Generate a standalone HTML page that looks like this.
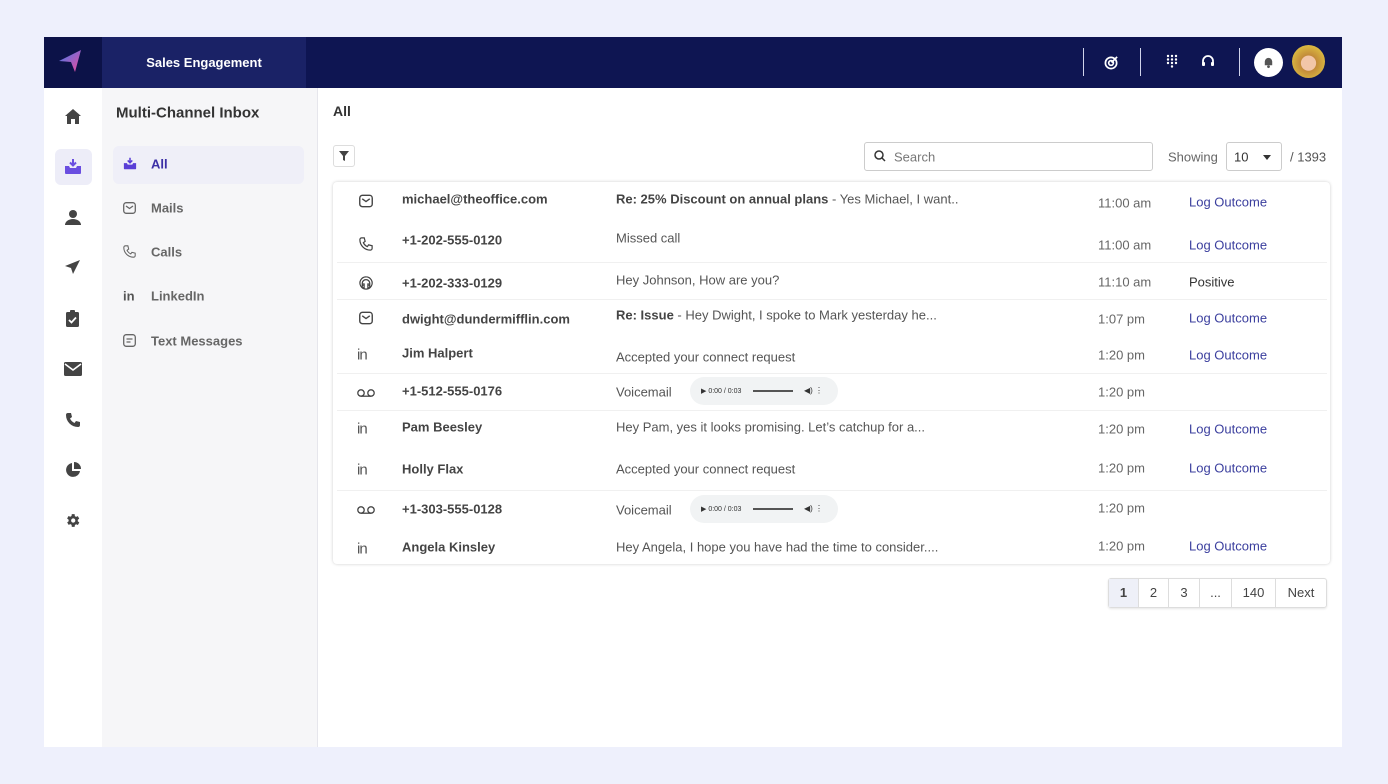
<!DOCTYPE html>
<html><head><meta charset="utf-8"><style>
*{margin:0;padding:0;box-sizing:border-box}
body{width:1388px;height:784px;background:#eef0fc;font-family:"Liberation Sans",sans-serif;position:relative;overflow:hidden}
.a{position:absolute}
.t{position:absolute;font-size:13px;color:#555;white-space:nowrap;transform:translateY(-50%)}
.n{color:#444;font-weight:bold}
.lo{color:#3b3f9e}
.tm{color:#666}
svg{display:block}
.ico{position:absolute;transform:translate(-50%,-50%)}
.player{position:absolute;width:148px;height:28px;border-radius:14px;background:#f1f3f4;transform:translateY(-50%);font-size:6px;color:#333}
</style></head><body>
<!-- frame -->
<div class="a" style="left:44px;top:37px;width:1298px;height:710px;background:#fff"></div>
<!-- header -->
<div class="a" style="left:44px;top:37px;width:1298px;height:51px;background:#0e1552"></div>
<div class="a" style="left:44px;top:37px;width:58px;height:51px;background:#0c1248"></div>
<div class="a" style="left:102px;top:37px;width:204px;height:51px;background:#1a2266;color:#fff;font-size:13px;font-weight:bold;text-align:center;line-height:51px">Sales Engagement</div>
<svg class="a" style="left:57px;top:48px" width="26" height="26" viewBox="0 0 26 26"><defs><linearGradient id="g" x1="0" y1="0" x2="1" y2="1"><stop offset="0" stop-color="#3f7bf0"/><stop offset="1" stop-color="#f0489a"/></linearGradient></defs><path d="M2 13 L24 2 L18 24 L14 14 Z" fill="url(#g)"/></svg>
<div class="a" style="left:1083px;top:48px;width:1px;height:28px;background:#cfd3ea"></div>
<div class="a" style="left:1140px;top:48px;width:1px;height:28px;background:#cfd3ea"></div>
<div class="a" style="left:1239px;top:48px;width:1px;height:28px;background:#cfd3ea"></div>
<svg class="a" style="left:1104px;top:55px" width="15" height="15" viewBox="0 0 16 16"><circle cx="7.5" cy="8.5" r="6" fill="none" stroke="#fff" stroke-width="1.8"/><circle cx="7.5" cy="8.5" r="2.5" fill="none" stroke="#fff" stroke-width="1.8"/><path d="M8 8 L14 2" stroke="#fff" stroke-width="1.8"/></svg>
<svg class="a" style="left:1165px;top:54px" width="14" height="14" viewBox="0 0 14 14" fill="#fff"><circle cx="3" cy="2" r="1.2"/><circle cx="7" cy="2" r="1.2"/><circle cx="11" cy="2" r="1.2"/><circle cx="3" cy="5.5" r="1.2"/><circle cx="7" cy="5.5" r="1.2"/><circle cx="11" cy="5.5" r="1.2"/><circle cx="3" cy="9" r="1.2"/><circle cx="7" cy="9" r="1.2"/><circle cx="11" cy="9" r="1.2"/><circle cx="7" cy="12.5" r="1.2"/></svg>
<svg class="a" style="left:1200px;top:53px" width="16" height="16" viewBox="0 0 16 16"><path d="M3 10 V8 a5 5 0 0 1 10 0 V10" fill="none" stroke="#fff" stroke-width="1.8"/><rect x="2" y="9" width="3" height="4" rx="1" fill="#fff"/><rect x="11" y="9" width="3" height="4" rx="1" fill="#fff"/></svg>
<div class="a" style="left:1254px;top:48px;width:29px;height:29px;border-radius:50%;background:#fff"></div>
<svg class="a" style="left:1262px;top:56px" width="13" height="13" viewBox="0 0 14 14"><path d="M3 10 V6 a4 4 0 0 1 8 0 V10 Z" fill="#555"/><circle cx="7" cy="11.5" r="1.5" fill="#555"/></svg>
<div class="a" style="left:1292px;top:45px;width:33px;height:33px;border-radius:50%;background:radial-gradient(circle at 50% 55%,#f2c6a8 0 30%,#c28a3a 32%,#d9b640 70%)"></div>
<!-- left icon rail -->
<div class="a" style="left:44px;top:88px;width:58px;height:659px;background:#fff"></div>
<div class="a" style="left:55px;top:149px;width:37px;height:36px;border-radius:6px;background:#ededf8"></div>
<svg class="a" style="left:64px;top:108px" width="18" height="17" viewBox="0 0 18 17"><path d="M9 1 L17 8 H15 V16 H11 V11 H7 V16 H3 V8 H1 Z" fill="#444"/></svg>
<svg class="a" style="left:64px;top:158px" width="18" height="17" viewBox="0 0 18 17"><path d="M1 8 H5 L6 10 H12 L13 8 H17 V15 a1 1 0 0 1 -1 1 H2 a1 1 0 0 1 -1 -1 Z" fill="#6a4ee0"/><path d="M9 1 V7 M6 4.5 L9 7.5 L12 4.5" stroke="#6a4ee0" stroke-width="2" fill="none"/></svg>
<svg class="a" style="left:64px;top:209px" width="18" height="17" viewBox="0 0 18 17"><circle cx="9" cy="5" r="4" fill="#444"/><path d="M1 16 a8 6 0 0 1 16 0 Z" fill="#444"/></svg>
<svg class="a" style="left:64px;top:259px" width="17" height="16" viewBox="0 0 17 16"><path d="M16 1 L1 7 L7 9 L9 15 Z" fill="#444"/></svg>
<svg class="a" style="left:65px;top:309px" width="15" height="19" viewBox="0 0 15 19"><rect x="1" y="3" width="13" height="15" rx="1.5" fill="#444"/><rect x="5" y="1" width="5" height="4" rx="1" fill="#444"/><path d="M4 11 L6.5 13.5 L11 8.5" stroke="#fff" stroke-width="1.8" fill="none"/></svg>
<svg class="a" style="left:64px;top:362px" width="18" height="14" viewBox="0 0 18 14"><rect x="0" y="0" width="18" height="14" rx="1.5" fill="#444"/><path d="M1 2 L9 8 L17 2" stroke="#fff" stroke-width="1.6" fill="none"/></svg>
<svg class="a" style="left:65px;top:412px" width="16" height="16" viewBox="0 0 16 16"><path d="M3 1 L6 1 L7 5 L5 6.5 A9 9 0 0 0 9.5 11 L11 9 L15 10 V13 A2 2 0 0 1 13 15 A12 12 0 0 1 1 3 A2 2 0 0 1 3 1 Z" fill="#444"/></svg>
<svg class="a" style="left:65px;top:462px" width="16" height="16" viewBox="0 0 16 16"><path d="M7 1 A7 7 0 1 0 15 9 H7 Z" fill="#444"/><path d="M9 0 V7 H16 A7 7 0 0 0 9 0 Z" fill="#444"/></svg>
<svg class="a" style="left:64px;top:512px" width="17" height="17" viewBox="0 0 24 24"><path d="M19.4 13a7.5 7.5 0 0 0 0-2l2.1-1.6-2-3.5-2.5 1a7.6 7.6 0 0 0-1.7-1L15 3h-4l-.4 2.7a7.6 7.6 0 0 0-1.7 1l-2.5-1-2 3.5L6.6 11a7.5 7.5 0 0 0 0 2l-2.1 1.6 2 3.5 2.5-1a7.6 7.6 0 0 0 1.7 1L11 21h4l.4-2.7a7.6 7.6 0 0 0 1.7-1l2.5 1 2-3.5z" fill="#444"/><circle cx="13" cy="12" r="3" fill="#fff"/></svg>
<!-- secondary nav -->
<div class="a" style="left:102px;top:88px;width:216px;height:659px;background:#f6f6f8;border-right:1px solid #e6e6ec"></div>
<div class="t" style="left:116px;top:113px;font-size:15px;font-weight:bold;color:#333">Multi-Channel Inbox</div>
<div class="a" style="left:113px;top:146px;width:191px;height:38px;border-radius:6px;background:#efeff8"></div>
<svg class="a" style="left:123px;top:157px" width="14" height="13" viewBox="0 0 18 17"><path d="M1 8 H5 L6 10 H12 L13 8 H17 V15 a1 1 0 0 1 -1 1 H2 a1 1 0 0 1 -1 -1 Z" fill="#5a3fd6"/><path d="M9 1 V7 M6 4.5 L9 7.5 L12 4.5" stroke="#5a3fd6" stroke-width="2" fill="none"/></svg>
<div class="t" style="left:151px;top:164px;color:#3b2fa6;font-weight:bold">All</div>
<svg class="a" style="left:123px;top:202px" width="13" height="12" viewBox="0 0 13 12"><rect x="0.7" y="0.7" width="11.6" height="10.6" rx="2.5" fill="none" stroke="#666" stroke-width="1.3"/><path d="M3 4 L6.5 6.5 L10 4" stroke="#666" stroke-width="1.3" fill="none"/></svg>
<div class="t" style="left:151px;top:208px;color:#666;font-weight:bold">Mails</div>
<svg class="a" style="left:123px;top:245px" width="13" height="13" viewBox="0 0 16 16"><path d="M3 1 L6 1 L7 5 L5 6.5 A9 9 0 0 0 9.5 11 L11 9 L15 10 V13 A2 2 0 0 1 13 15 A12 12 0 0 1 1 3 A2 2 0 0 1 3 1 Z" fill="none" stroke="#666" stroke-width="1.3"/></svg>
<div class="t" style="left:151px;top:252px;color:#666;font-weight:bold">Calls</div>
<div class="t" style="left:123px;top:296px;color:#555;font-weight:bold;font-size:13px">in</div>
<div class="t" style="left:151px;top:296px;color:#666;font-weight:bold">LinkedIn</div>
<svg class="a" style="left:123px;top:334px" width="13" height="13" viewBox="0 0 13 13"><rect x="0.7" y="0.7" width="11.6" height="11.6" rx="2.5" fill="none" stroke="#666" stroke-width="1.3"/><path d="M3.5 5 H9.5 M3.5 8 H7.5" stroke="#666" stroke-width="1.3"/></svg>
<div class="t" style="left:151px;top:341px;color:#666;font-weight:bold">Text Messages</div>
<!-- main -->
<div class="t" style="left:333px;top:111px;font-size:14px;font-weight:bold;color:#333">All</div>
<div class="a" style="left:333px;top:145px;width:22px;height:22px;border:1px solid #ddd;border-radius:3px"></div>
<svg class="a" style="left:339px;top:151px" width="10" height="10" viewBox="0 0 10 10"><path d="M0 0 H10 L6 5 V10 L4 9 V5 Z" fill="#444"/></svg>
<div class="a" style="left:864px;top:142px;width:289px;height:29px;border:1px solid #ccc;border-radius:3px"></div>
<svg class="a" style="left:874px;top:150px" width="12" height="12" viewBox="0 0 12 12"><circle cx="5" cy="5" r="4" fill="none" stroke="#333" stroke-width="1.5"/><path d="M8 8 L11 11" stroke="#333" stroke-width="1.5"/></svg>
<div class="t" style="left:894px;top:157px;color:#777">Search</div>
<div class="t" style="left:1168px;top:157px;color:#666">Showing</div>
<div class="a" style="left:1226px;top:142px;width:56px;height:29px;border:1px solid #ccc;border-radius:3px"></div>
<div class="t" style="left:1234px;top:157px;color:#333">10</div>
<div class="a" style="left:1263px;top:155px;border:4px solid transparent;border-top:5px solid #333"></div>
<div class="t" style="left:1290px;top:157px;color:#555">/ 1393</div>
<!-- card -->
<div class="a" style="left:333px;top:182px;width:997px;height:382px;border-radius:4px;box-shadow:0 0 3px rgba(0,0,0,.2);background:#fff"></div>
<div class="a" style="left:337px;top:262px;width:990px;height:1px;background:#f0f0f0"></div>
<div class="a" style="left:337px;top:299px;width:990px;height:1px;background:#f0f0f0"></div>
<div class="a" style="left:337px;top:373px;width:990px;height:1px;background:#f0f0f0"></div>
<div class="a" style="left:337px;top:410px;width:990px;height:1px;background:#f0f0f0"></div>
<div class="a" style="left:337px;top:490px;width:990px;height:1px;background:#f0f0f0"></div>

<!-- icons -->
<svg class="ico" style="left:366px;top:201px" width="14" height="13" viewBox="0 0 13 12"><rect x="0.7" y="0.7" width="11.6" height="10.6" rx="2.5" fill="none" stroke="#444" stroke-width="1.3"/><path d="M3 4 L6.5 6.5 L10 4" stroke="#444" stroke-width="1.3" fill="none"/></svg>
<svg class="ico" style="left:366px;top:244px" width="14" height="14" viewBox="0 0 16 16"><path d="M3 1 L6 1 L7 5 L5 6.5 A9 9 0 0 0 9.5 11 L11 9 L15 10 V13 A2 2 0 0 1 13 15 A12 12 0 0 1 1 3 A2 2 0 0 1 3 1 Z" fill="none" stroke="#444" stroke-width="1.4"/></svg>
<svg class="ico" style="left:366px;top:283px" width="15" height="15" viewBox="0 0 16 16"><path d="M8 1.5 a6.5 6.5 0 1 0 0.1 0 M5 11 a4 4 0 1 1 6 0 M4 9 h2 v4 h-2 z M10 9 h2 v4 h-2 z" fill="none" stroke="#444" stroke-width="1.3"/></svg>
<svg class="ico" style="left:366px;top:318px" width="14" height="13" viewBox="0 0 13 12"><rect x="0.7" y="0.7" width="11.6" height="10.6" rx="2.5" fill="none" stroke="#444" stroke-width="1.3"/><path d="M3 4 L6.5 6.5 L10 4" stroke="#444" stroke-width="1.3" fill="none"/></svg>
<svg class="ico" style="left:366px;top:393px" width="18" height="9" viewBox="0 0 18 9"><circle cx="4" cy="4.5" r="3.2" fill="none" stroke="#444" stroke-width="1.3"/><circle cx="14" cy="4.5" r="3.2" fill="none" stroke="#444" stroke-width="1.3"/><path d="M4 7.7 H14" stroke="#444" stroke-width="1.3"/></svg>
<svg class="ico" style="left:366px;top:510px" width="18" height="9" viewBox="0 0 18 9"><circle cx="4" cy="4.5" r="3.2" fill="none" stroke="#444" stroke-width="1.3"/><circle cx="14" cy="4.5" r="3.2" fill="none" stroke="#444" stroke-width="1.3"/><path d="M4 7.7 H14" stroke="#444" stroke-width="1.3"/></svg>
<div class="t" style="left:357px;top:355px;color:#555;font-size:15px;letter-spacing:-1px">in</div>
<div class="t" style="left:357px;top:429px;color:#555;font-size:15px;letter-spacing:-1px">in</div>
<div class="t" style="left:357px;top:470px;color:#555;font-size:15px;letter-spacing:-1px">in</div>
<div class="t" style="left:357px;top:549px;color:#555;font-size:15px;letter-spacing:-1px">in</div>

<!-- names -->
<div class="t n" style="left:402px;top:199px">michael@theoffice.com</div>
<div class="t n" style="left:402px;top:240px">+1-202-555-0120</div>
<div class="t n" style="left:402px;top:283px">+1-202-333-0129</div>
<div class="t n" style="left:402px;top:319px">dwight@dundermifflin.com</div>
<div class="t n" style="left:402px;top:353px">Jim Halpert</div>
<div class="t n" style="left:402px;top:391px">+1-512-555-0176</div>
<div class="t n" style="left:402px;top:427px">Pam Beesley</div>
<div class="t n" style="left:402px;top:469px">Holly Flax</div>
<div class="t n" style="left:402px;top:509px">+1-303-555-0128</div>
<div class="t n" style="left:402px;top:547px">Angela Kinsley</div>
<!-- messages -->
<div class="t" style="left:616px;top:199px"><b style="color:#444">Re: 25% Discount on annual plans</b> - Yes Michael, I want..</div>
<div class="t" style="left:616px;top:238px">Missed call</div>
<div class="t" style="left:616px;top:280px">Hey Johnson, How are you?</div>
<div class="t" style="left:616px;top:315px"><b style="color:#444">Re: Issue</b> - Hey Dwight, I spoke to Mark yesterday he...</div>
<div class="t" style="left:616px;top:357px">Accepted your connect request</div>
<div class="t" style="left:616px;top:392px">Voicemail</div>
<div class="player" style="left:690px;top:391px"><span class="a" style="left:11px;top:10px;font-size:7px">▶ 0:00 / 0:03</span><span class="a" style="left:63px;top:13px;width:40px;height:2px;background:#555"></span><span class="a" style="left:114px;top:9px;font-size:8px">◀) ⋮</span></div>
<div class="t" style="left:616px;top:427px">Hey Pam, yes it looks promising. Let’s catchup for a...</div>
<div class="t" style="left:616px;top:469px">Accepted your connect request</div>
<div class="t" style="left:616px;top:510px">Voicemail</div>
<div class="player" style="left:690px;top:509px"><span class="a" style="left:11px;top:10px;font-size:7px">▶ 0:00 / 0:03</span><span class="a" style="left:63px;top:13px;width:40px;height:2px;background:#555"></span><span class="a" style="left:114px;top:9px;font-size:8px">◀) ⋮</span></div>
<div class="t" style="left:616px;top:547px">Hey Angela, I hope you have had the time to consider....</div>
<!-- times -->
<div class="t tm" style="left:1098px;top:203px">11:00 am</div>
<div class="t tm" style="left:1098px;top:245px">11:00 am</div>
<div class="t tm" style="left:1098px;top:282px">11:10 am</div>
<div class="t tm" style="left:1098px;top:319px">1:07 pm</div>
<div class="t tm" style="left:1098px;top:355px">1:20 pm</div>
<div class="t tm" style="left:1098px;top:392px">1:20 pm</div>
<div class="t tm" style="left:1098px;top:429px">1:20 pm</div>
<div class="t tm" style="left:1098px;top:468px">1:20 pm</div>
<div class="t tm" style="left:1098px;top:508px">1:20 pm</div>
<div class="t tm" style="left:1098px;top:546px">1:20 pm</div>
<!-- actions -->
<div class="t lo" style="left:1189px;top:202px">Log Outcome</div>
<div class="t lo" style="left:1189px;top:245px">Log Outcome</div>
<div class="t" style="left:1189px;top:282px;color:#333">Positive</div>
<div class="t lo" style="left:1189px;top:318px">Log Outcome</div>
<div class="t lo" style="left:1189px;top:355px">Log Outcome</div>
<div class="t lo" style="left:1189px;top:429px">Log Outcome</div>
<div class="t lo" style="left:1189px;top:468px">Log Outcome</div>
<div class="t lo" style="left:1189px;top:546px">Log Outcome</div>
<!-- pagination -->
<div class="a" style="left:1108px;top:578px;width:219px;height:30px;border:1px solid #ddd;border-radius:3px;box-shadow:0 1px 2px rgba(0,0,0,.1);display:flex;font-size:13px;color:#444">
<div style="width:30px;line-height:28px;text-align:center;background:#eef0f8;font-weight:bold;border-right:1px solid #ddd">1</div>
<div style="width:30px;line-height:28px;text-align:center;border-right:1px solid #ddd">2</div>
<div style="width:31px;line-height:28px;text-align:center;border-right:1px solid #ddd">3</div>
<div style="width:32px;line-height:28px;text-align:center;border-right:1px solid #ddd">...</div>
<div style="width:44px;line-height:28px;text-align:center;border-right:1px solid #ddd">140</div>
<div style="flex:1;line-height:28px;text-align:center">Next</div>
</div>
</body></html>
